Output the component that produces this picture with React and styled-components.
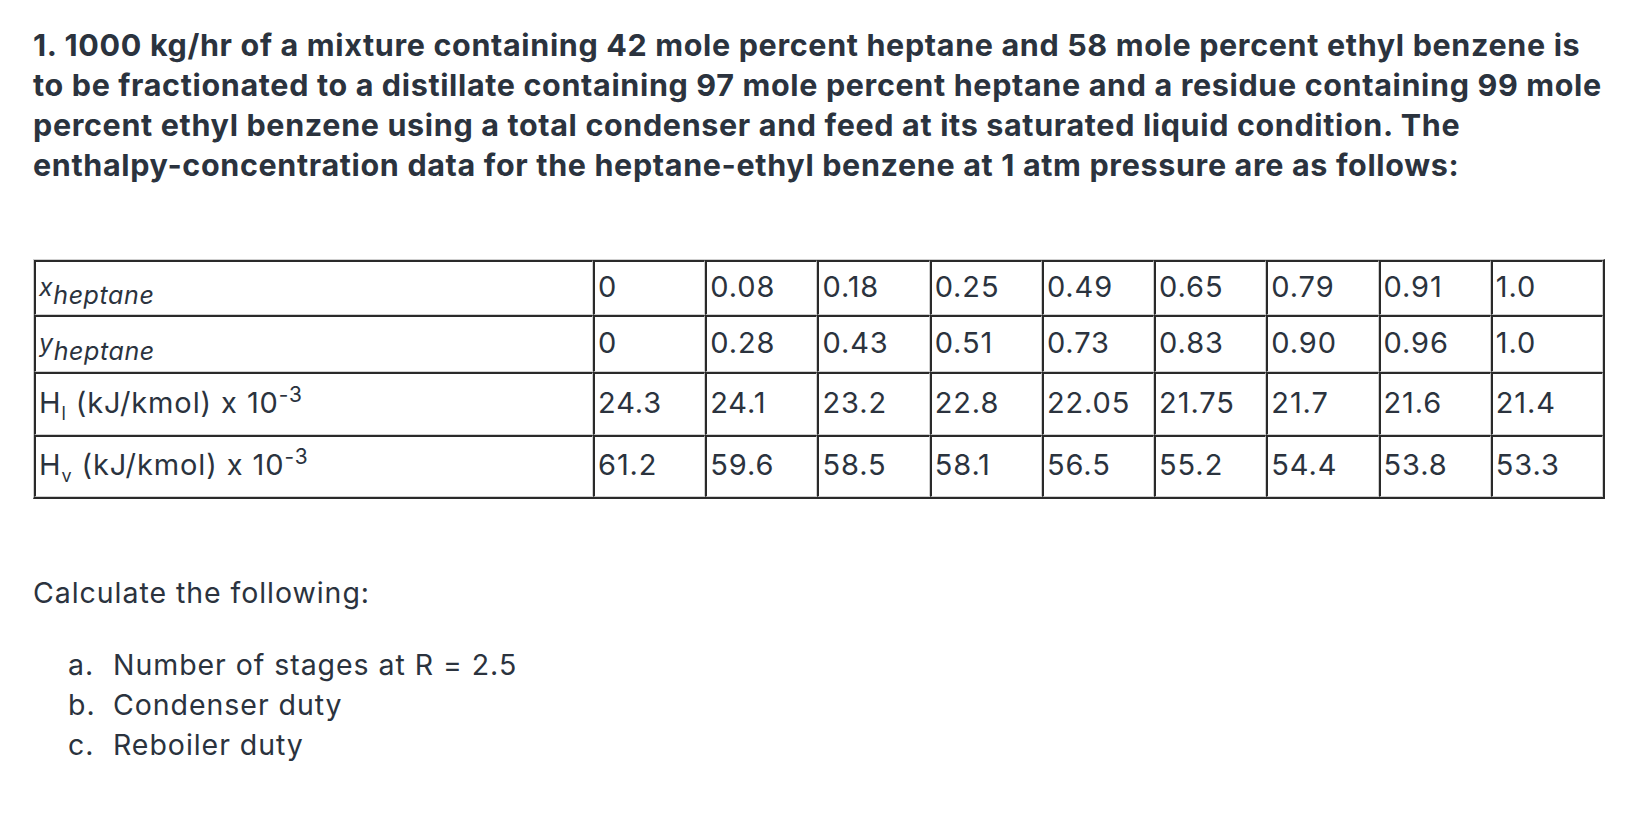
import React from "react";
import styled, { createGlobalStyle } from "styled-components";

const GlobalStyle = createGlobalStyle`
  * { box-sizing: border-box; }
  body {
    margin: 0;
    background: #ffffff;
    font-family: Inter, "Noto Sans", "Liberation Sans", sans-serif;
    color: #2b333e;
  }
`;

const Page = styled.div`
  padding: 25px 0 40px 33px;
`;

const Question = styled.p`
  margin: 0;
  font-size: 30.5px;
  font-weight: 700;
  letter-spacing: 0.65px;
  line-height: 40px;
  white-space: nowrap;
`;

const DataTable = styled.table`
  margin-top: 74px;
  width: 1572px;
  table-layout: fixed;
  border-collapse: separate;
  border-spacing: 0;
  border-style: solid;
  border-width: 1px 2px 2px 1px;
  border-color: #cfcfcf #2a2a2a #2a2a2a #cfcfcf;
  font-size: 29px;
  letter-spacing: 0.9px;
  color: #2b333e;
`;

const LabelCol = styled.col`
  width: 559px;
`;

const Row = styled.tr`
  height: ${(p) => p.$h}px;
`;

const Cell = styled.td`
  padding: 0 3px 3px;
  vertical-align: middle;
  border-style: solid;
  border-width: 2px 1px 1px 2px;
  border-color: #2a2a2a #cfcfcf #cfcfcf #2a2a2a;
  white-space: nowrap;
  line-height: 32px;

  sup {
    font-size: 0.72em;
    line-height: 0;
  }
  sub {
    font-size: 0.62em;
    line-height: 0;
  }
`;

const VarName = styled.i`
  font-size: 25px;
  letter-spacing: 0.6px;

  sub {
    font-size: 25px;
    vertical-align: -8px;
  }
`;

const Prompt = styled.p`
  margin: 74px 0 0;
  font-size: 28.5px;
  letter-spacing: 0.95px;
  line-height: 40px;
`;

const Parts = styled.ol`
  list-style: none;
  margin: 32px 0 0;
  padding: 0 0 0 35px;
  font-size: 28.5px;
  letter-spacing: 0.95px;
  line-height: 40px;
`;

const Part = styled.li`
  display: flex;
`;

const Marker = styled.span`
  width: 45px;
  flex-shrink: 0;
`;

const rows = [
  { label: <VarName>x<sub>heptane</sub></VarName>, h: 55, values: ["0", "0.08", "0.18", "0.25", "0.49", "0.65", "0.79", "0.91", "1.0"] },
  { label: <VarName>y<sub>heptane</sub></VarName>, h: 57, values: ["0", "0.28", "0.43", "0.51", "0.73", "0.83", "0.90", "0.96", "1.0"] },
  { label: <>H<sub>l</sub> (kJ/kmol) x 10<sup>-3</sup></>, h: 63, values: ["24.3", "24.1", "23.2", "22.8", "22.05", "21.75", "21.7", "21.6", "21.4"] },
  { label: <>H<sub>v</sub> (kJ/kmol) x 10<sup>-3</sup></>, h: 62, values: ["61.2", "59.6", "58.5", "58.1", "56.5", "55.2", "54.4", "53.8", "53.3"] },
];

const parts = [
  ["a.", "Number of stages at R = 2.5"],
  ["b.", "Condenser duty"],
  ["c.", "Reboiler duty"],
];

export default function App() {
  return (
    <>
      <GlobalStyle />
      <Page>
        <Question>
          1. 1000 kg/hr of a mixture containing 42 mole percent heptane and 58 mole percent ethyl benzene is
          <br />
          to be fractionated to a distillate containing 97 mole percent heptane and a residue containing 99 mole
          <br />
          percent ethyl benzene using a total condenser and feed at its saturated liquid condition. The
          <br />
          enthalpy-concentration data for the heptane-ethyl benzene at 1 atm pressure are as follows:
        </Question>

        <DataTable>
          <colgroup>
            <LabelCol />
          </colgroup>
          <tbody>
            {rows.map((r, i) => (
              <Row key={i} $h={r.h}>
                <Cell>{r.label}</Cell>
                {r.values.map((v, j) => (
                  <Cell key={j}>{v}</Cell>
                ))}
              </Row>
            ))}
          </tbody>
        </DataTable>

        <Prompt>Calculate the following:</Prompt>

        <Parts>
          {parts.map(([m, t]) => (
            <Part key={m}>
              <Marker>{m}</Marker>
              <span>{t}</span>
            </Part>
          ))}
        </Parts>
      </Page>
    </>
  );
}
